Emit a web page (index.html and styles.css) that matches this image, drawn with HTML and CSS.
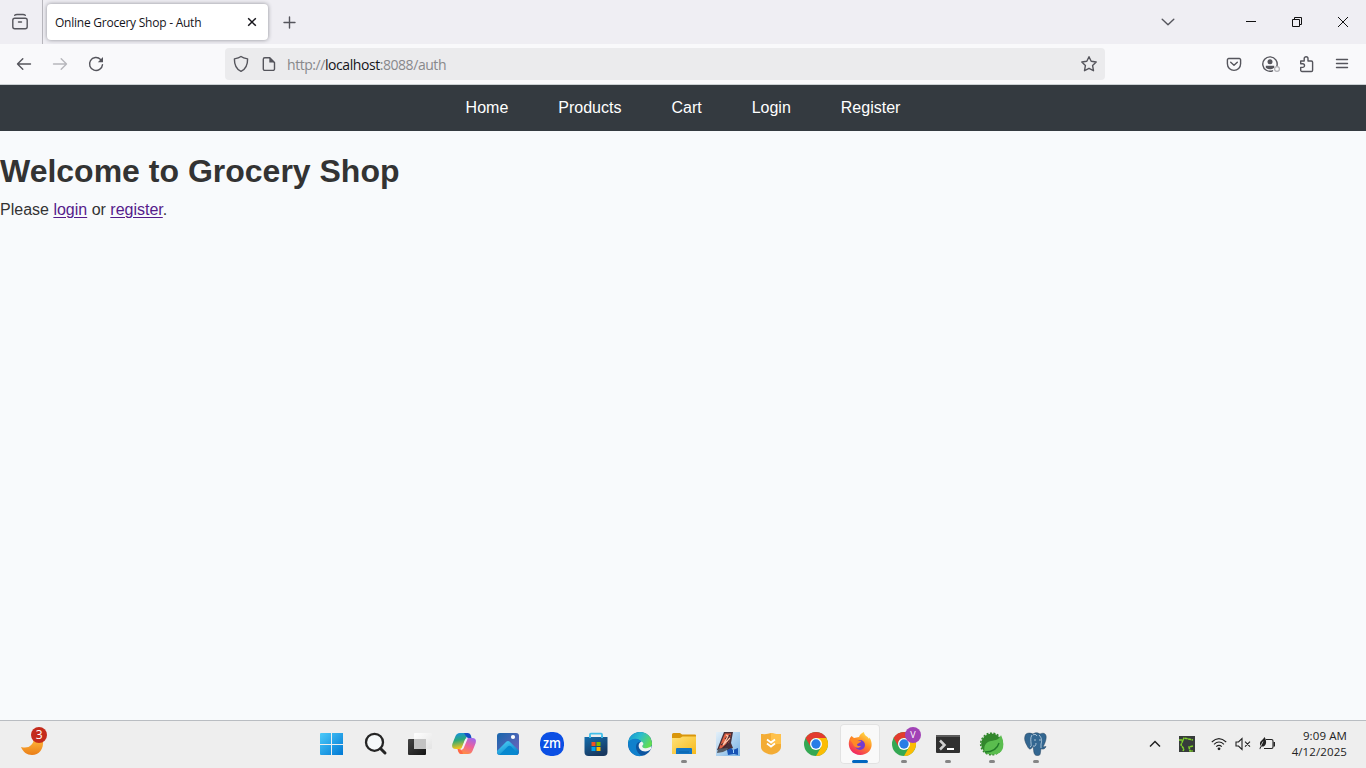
FILE: index.html
```html
<!DOCTYPE html>
<html lang="en">
<head>
<meta charset="utf-8">
<title>Online Grocery Shop - Auth</title>
<link rel="stylesheet" href="styles.css">
</head>
<body>
<header class="tabbar">
  <div class="history"><svg class="line" width="18" height="18" viewBox="0 0 18 18"><rect x="1.8" y="5.2" width="14.4" height="10.6" rx="2"/><path d="M3.7 2.2Q4.5 1.5 6 1.5h6q1.5 0 2.3.7M7.5 9h3"/></svg></div>
  <div class="tab"><span class="tab-title">Online Grocery Shop - Auth</span><svg class="tab-close" width="10" height="10" viewBox="0 0 10 10"><path d="m1.200 1.200 7.600 7.600M8.800 1.200 1.200 8.800"/></svg></div>
  <svg class="line newtab" width="14" height="14" viewBox="0 0 14 14"><path d="M6.500 2v11M1 7.500h11"/></svg>
  <div class="window-controls">
    <svg class="line" width="14" height="10" viewBox="0 0 14 10"><path d="m1.200 2.200 5.800 5.500 5.800-5.500"/></svg>
    <svg class="control minimize" width="12" height="12" viewBox="0 0 12 12"><path d="M1 5.500h10"/></svg>
    <svg class="control restore" width="12" height="12" viewBox="0 0 12 12"><path d="M1.500 3.500h7v7h-7zM3.500 3.500v-2h7v7h-2"/></svg>
    <svg class="control close" width="12" height="12" viewBox="0 0 12 12"><path d="m1 1 10 10M11 1 1 11"/></svg>
  </div>
</header>
<div class="toolbar">
  <div class="nav-buttons">
    <svg class="line" width="16" height="16" viewBox="0 0 16 16"><path d="M14.500 8H1.500M6.800 2.700 1.500 8l5.300 5.300"/></svg>
    <svg class="line disabled" width="16" height="16" viewBox="0 0 16 16"><path d="M1.500 8h13M9.200 2.700 14.500 8l-5.300 5.300"/></svg>
    <svg class="line" width="16" height="16" viewBox="0 0 16 16"><path d="M14.500 8.600A6.500 6.500 0 1 1 12.600 3.400l1 1"/><path class="solid" d="M15 1v5.200H9.800z"/></svg>
  </div>
  <div class="urlbar">
    <svg class="line" width="16" height="18" viewBox="0 0 16 18"><path d="M8 1.500C9.500 2.700 12 3.500 14.600 3.900 14.700 9.500 12.800 14 8 16.400 3.200 14 1.300 9.500 1.400 3.900 4 3.500 6.500 2.700 8 1.500z"/></svg>
    <svg class="line page-icon" width="14" height="16" viewBox="0 0 14 16"><path d="M2.800 1.700h5l4.700 4.700v6.500a1.500 1.500 0 0 1-1.500 1.500H2.800a1.500 1.500 0 0 1-1.500-1.500V3.200a1.500 1.500 0 0 1 1.500-1.500z"/><path class="solid" d="M7.300 1.300v5.200h5.200z"/></svg>
    <span class="url">http://<b>localhost</b>:8088/auth</span>
    <svg class="line star" width="18" height="18" viewBox="0 0 18 18"><path d="m9 1.700 2.200 4.600 5 .7-3.600 3.600.9 5.100L9 13.300l-4.500 2.400.9-5.100L1.800 7l5-.7z"/></svg>
  </div>
  <div class="actions">
    <svg class="line" width="16" height="16" viewBox="0 0 16 16"><path d="M2.700 2.500h10.600a1.300 1.300 0 0 1 1.300 1.300v4a6.600 6.600 0 0 1-13.200 0v-4a1.300 1.300 0 0 1 1.300-1.300zM4.700 6.200 8 9.300l3.300-3.100"/></svg>
    <svg class="line account" width="20" height="18" viewBox="0 0 20 18"><path d="M11.500 15.800A7.200 7.200 0 1 1 15.900 11"/><circle class="solid" cx="9" cy="6.700" r="2.500"/><path class="solid" d="M4.800 10.700h8.400v2Q9 15.800 4.800 12.700z"/><circle class="muted" cx="16" cy="14" r="2.400"/></svg>
    <svg class="line" width="16" height="18" viewBox="0 0 16 18"><path d="M1.700 6h3.500V3.600a1.900 1.900 0 0 1 3.800 0V6h3.300a1.300 1.300 0 0 1 1.300 1.300v7.900a1.300 1.300 0 0 1-1.300 1.300H3a1.300 1.300 0 0 1-1.300-1.300v-2.800h2a1.800 1.800 0 0 0 0-3.600h-2z"/></svg>
    <svg class="line" width="14" height="12" viewBox="0 0 14 12"><path d="M1.500 1.500h11M1.500 5.500h11M1.500 9.500h11"/></svg>
  </div>
</div>
<nav class="site-nav"><a>Home</a><a>Products</a><a>Cart</a><a>Login</a><a>Register</a></nav>
<main class="content">
  <h1>Welcome to Grocery Shop</h1>
  <p>Please <a href="#login">login</a> or <a href="#register">register</a>.</p>
</main>
<footer class="taskbar">
  <svg class="weather" width="30" height="32" viewBox="0 0 30 32">
    <defs><linearGradient id="moon" x2="0" y2="1"><stop stop-color="#ffb83b"/><stop offset="1" stop-color="#ea7e18"/></linearGradient></defs>
    <path fill="url(#moon)" d="M1 20c8 2 12-2 13-8l9 1c1 9-4 15-11 15-5 0-9-3-11-8z"/><circle cx="19" cy="8" r="8" fill="#c42b1c"/><text class="badge-count" x="19.300" y="12">3</text>
  </svg>
  <div class="apps">
    <div class="app"><svg width="24" height="24" viewBox="0 0 24 24"><defs><linearGradient id="win" x2="1" y2="1"><stop stop-color="#4ccbfa"/><stop offset="1" stop-color="#0078d4"/></linearGradient></defs><path fill="url(#win)" d="M1 1h22v22H1q-1 0-1-1V2q0-1 1-1z"/><path stroke="#eee" d="M11.500 1v22M0 12.500h23"/></svg></div>
    <div class="app"><svg width="24" height="24" viewBox="0 0 24 24"><circle cx="10.500" cy="10.300" r="8.500" fill="#f5f8f9" stroke="#252525" stroke-width="2.300"/><path stroke="#252525" stroke-width="3" stroke-linecap="round" d="m16.500 16.500 4.500 4.500"/></svg></div>
    <div class="app"><svg width="24" height="24" viewBox="0 0 24 24"><defs><linearGradient id="view" x2="1" y2="1"><stop stop-color="#444"/><stop offset="1" stop-color="#151515"/></linearGradient><linearGradient id="pane" x2="1" y2="1"><stop stop-color="#fff"/><stop offset="1" stop-color="#e4e4e4"/></linearGradient></defs><rect y="7" width="18" height="16" rx="1" fill="url(#view)"/><rect x="6" y="1" width="18" height="16" rx="1" fill="url(#pane)"/><path fill="#c3c3c3" d="M6 7h12v10H6z"/></svg></div>
    <div class="app"><svg width="24" height="24" viewBox="0 0 24 24"><defs><linearGradient id="cpa" x2=".2" y2="1"><stop stop-color="#168eed"/><stop offset=".5" stop-color="#2aa879"/><stop offset="1" stop-color="#f2c31d"/></linearGradient><linearGradient id="cpb" x1=".8" x2=".4" y2="1"><stop stop-color="#9c68ee"/><stop offset=".5" stop-color="#ec619e"/><stop offset="1" stop-color="#ff8b48"/></linearGradient></defs><path fill="url(#cpa)" d="M8 1h8l-5.500 14q-.8 2-3 2H4q-5 0-3.700-5L3.300 4.500Q4.500 1 8 1z"/><path fill="url(#cpb)" d="M16 22H8l5.500-14q.8-2 3-2H20q5 0 3.700 5l-3 7.500Q19.500 22 16 22z"/><path fill="#1750c5" d="M12 1h4q2.300 0 2.900 2.500L19.500 6h-3q-2 0-2.800-2.300z"/><path fill="#ff6845" d="M5.500 17H7q2.300 0 3 2l1 3H9q-2 0-2.800-2.500z"/><path fill="#f4f2f4" d="M12.800 8q.6-1.700 2.300-1.700h.7l-4.200 9.900q-.5 1.200-2 1.200h-.5z"/></svg></div>
    <div class="app"><svg width="24" height="24" viewBox="0 0 24 24"><defs><linearGradient id="pic" x2="1" y2="1"><stop stop-color="#1766ac"/><stop offset="1" stop-color="#7464bd"/></linearGradient><linearGradient id="hill" x2=".7" y2="1"><stop stop-color="#54dbfb"/><stop offset="1" stop-color="#077fc9"/></linearGradient></defs><rect x="1" y="1" width="22" height="22" rx="3" fill="url(#pic)"/><path fill="url(#hill)" d="M1 19 10.500 9.500q1.500-1.200 3 0l9.300 9V20q0 3-3 3H4q-3 0-3-3z"/><path fill="#0788cf" d="m3.500 22.700 8.500-8.500q1.500-1 3 0l7 8-2 .8H4z"/><circle cx="17" cy="5" r="2.100" fill="#fff"/></svg></div>
    <div class="app"><svg width="24" height="24" viewBox="0 0 24 24"><rect width="24" height="24" rx="10.500" fill="#0b4fe4"/><text class="zoom-logo" x="12" y="15.600" textLength="18" lengthAdjust="spacingAndGlyphs">zm</text></svg></div>
    <div class="app"><svg width="24" height="24" viewBox="0 0 24 24"><defs><linearGradient id="store" x2=".5" y2="1"><stop stop-color="#146eae"/><stop offset="1" stop-color="#183860"/></linearGradient></defs><path fill="none" stroke="#42bfe9" stroke-width="1.800" d="M6 7V2.500q0-.8.8-.8h10.400q.8 0 .8.800V7"/><path fill="url(#store)" d="M.5 5h23v15q0 4-4 4h-15q-4 0-4-4z"/><path stroke="#42bfe9" stroke-width="1.800" d="M6 4v2M18 4v2"/><path fill="#f25022" d="M7.500 10h4v4h-4z"/><path fill="#7fba00" d="M12.500 10h4v4h-4z"/><path fill="#00a4ef" d="M7.500 15h4v4h-4z"/><path fill="#ffb900" d="M12.500 15h4v4h-4z"/></svg></div>
    <div class="app"><svg width="24" height="24" viewBox="0 0 24 24"><defs><linearGradient id="edge" x2="1" y2=".5"><stop stop-color="#128fd2"/><stop offset=".5" stop-color="#2bbdce"/><stop offset="1" stop-color="#62dc55"/></linearGradient></defs><circle cx="12" cy="12" r="12" fill="#0c55a0"/><path fill="url(#edge)" d="M0 11C1.500-3.500 22.500-4 24 11c.2 4.500-4 6.500-8.500 6-2-.3-1.500-1.500-1-3C16 8 6 4 0 11z"/><path fill="#1080cc" d="M0 11C3 5 12 6 13.500 10 9 9 6.500 14 9 19c1 2.300 3 4 5.500 4.700C6 26 0 19 0 11z"/><path fill="#f1f3f4" d="M13.700 9.500c2.600 1.800 1.500 3.200.8 4.300-.6 1.200.6 2.300 2.500 2.500 2.500.3 4.500-.8 6.500-2.200l-.5 3c-2.500 3-8.500 3.300-11 .2-2.300-2.800-1.500-6.700 1.700-7.800z"/></svg></div>
    <div class="app running"><svg width="24" height="24" viewBox="0 0 24 24"><defs><linearGradient id="folder" x2="1" y2="1"><stop stop-color="#ffe27a"/><stop offset="1" stop-color="#f7b91b"/></linearGradient></defs><path fill="#d9960b" d="M0 2.500Q0 1 1.500 1H8l2 1.500h13q1 0 1 1V8H0z"/><path fill="url(#folder)" d="M0 6h8l2.500-1.500H24V22H0z"/><path fill="#1375c4" d="M4 22v-5q0-1 1-1h14q1 0 1 1v5z"/><path fill="#0762aa" d="M7 19.500h10v1H7z"/></svg></div>
    <div class="app"><svg width="24" height="24" viewBox="0 0 24 24"><defs><linearGradient id="four" x2="1" y2="1"><stop stop-color="#e4f0f9"/><stop offset="1" stop-color="#78b3e5"/></linearGradient></defs><path fill="url(#four)" d="M0 0h24v24H0z"/><path fill="#493039" d="M8 0h9l-2 11 2 5-5 2H1L6 5z"/><path fill="#e06143" d="M9 1.500h6l-2 9-8 6H3L7 6z"/><path fill="none" stroke="#43242c" stroke-width="1.200" d="m9 7 5-4-4 7-5 3M14 6l-3 6-4 4"/><path fill="none" stroke="#ffc4aa" stroke-width="1.200" d="m10 3 2 1-5 9 7-7"/><path fill="#555c66" d="m2 17 10-1-1 2-4 2-6 1z"/><path fill="#1753b5" d="m11 18 4-2 2 2 5-2v7l-4-1-6 1z"/><path fill="#a0d4ff" d="M17 18h1v3h-1z"/></svg></div>
    <div class="app"><svg width="24" height="24" viewBox="0 0 24 24"><path fill="#f3ac35" d="M2 2q5 .5 9-1 4 1.500 10 1v13c0 5-7 7.500-10 7.500S1 20 1 15V2z"/><path fill="#ffc14b" d="M11 1q4 1.500 10 1v10H11z"/><path fill="none" stroke="#fff" stroke-width="1.800" d="m7 7.500 4 3 4-3m-8 4 4 3 4-3"/></svg></div>
    <div class="app"><svg width="24" height="24" viewBox="0 0 24 24"><g id="chrome"><circle cx="12" cy="12" r="12" fill="#34a853"/><path fill="#fbbc04" d="M12 6h10.400A12 12 0 0 1 12 24l5.200-9z"/><path fill="#e33b2e" d="M1.600 6A12 12 0 0 1 22.400 6H12a6 6 0 0 0-5.200 9z"/><circle cx="12" cy="12" r="6" fill="#fff"/><circle cx="12" cy="12" r="4.700" fill="#287de6"/></g></svg></div>
    <div class="app active"><svg width="24" height="24" viewBox="0 0 24 24"><defs><linearGradient id="fox" x1=".8" x2=".2" y2="1"><stop stop-color="#ffe54a"/><stop offset=".45" stop-color="#ff8b24"/><stop offset="1" stop-color="#ef176c"/></linearGradient></defs><path fill="url(#fox)" d="M2 6 3.500 4 6 6l5-1c1-3 3-4 5-5 0 4 4 4 5 7l.5-1.500c3 5 3 10-.5 14-5 5-14 4.500-18-1C0 14 .5 10 2 6z"/><circle cx="12" cy="13" r="5" fill="#743bd0"/><path fill="#ff8b27" d="M2 8c3-3 6-2 7 0l4 1c0 2-4 2-4 4 1 1.500 2.500 1 4 1-2 3-7 2-8-2-1-2-3-4-3-4z"/></svg></div>
    <div class="app running"><svg width="24" height="24" viewBox="0 0 24 24"><use href="#chrome"/></svg><span class="profile">V</span></div>
    <div class="app running"><svg width="24" height="24" viewBox="0 0 24 24"><path fill="#303030" d="M0 3h24v17q0 1-1 1H1q-1 0-1-1z"/><path fill="#5c5c5c" d="M0 3h24v2H0z"/><path fill="none" stroke="#d0d0d0" stroke-width="2.500" d="m4 8.500 4.500 4.500L4 17.500"/><path stroke="#fff" stroke-width="2" d="M11 17h7"/></svg></div>
    <div class="app running"><svg width="24" height="24" viewBox="0 0 24 24"><circle cx="11.500" cy="12" r="10.400" fill="#32872c"/><circle cx="11.500" cy="12" r="10.800" fill="none" stroke="#32872c" stroke-width="1.600" stroke-dasharray="2 1.500"/><path fill="#5abd4e" d="M21 3c4 9 3 17-4 19-4 1-8 0-12-1-2-6 0-11 6-12 5-1 8-1 10-6z"/><path fill="none" stroke="#227c28" stroke-width="1.400" d="M5 20c7 0 12-2 14-9"/></svg></div>
    <div class="app running"><svg width="24" height="24" viewBox="0 0 24 24"><path fill="#336791" stroke="#25405b" stroke-width=".5" d="M1 4c1-4 6-3 8-2 3-2 5-1 7 0 4-2 7 0 6 5-.5 3-2 6-3 8l3-.5c-1 3-4 3-5 2-1 6 0 7-4 7-4 0-3-6-4-9-3 4-4 3-6-1C1 10 0 7 1 4z"/><path fill="none" stroke="#dce9f3" stroke-width=".7" d="M8 3c-2 3-1 6-1 8s1 3-1 4M9 14q3 1 3-3M15 3c3 3 3 6 2 9v4M10 8h2M15 8h2M9 3c1-1 3-1 4 1"/></svg></div>
  </div>
  <div class="tray">
    <svg width="12" height="8" viewBox="0 0 12 8"><path class="tray-line" d="m1 6.500 5-5 5 5"/></svg>
    <svg width="16" height="16" viewBox="0 0 16 16"><path fill="#373b3b" d="M0 0h16v16H0z"/><path fill="none" stroke="#7ed12b" stroke-width="1.500" stroke-dasharray="3 .5" d="M0 4h4l1-2 9 2M4 4 2 9l3 4-1 2M14 10l-4 1 1 4h3"/></svg>
    <svg width="16" height="14" viewBox="0 0 16 14"><path class="tray-line thin" d="M.8 5q7-6.700 14.400 0M3 7.300q5-4.500 10 0M5.200 9.600Q8 7 10.800 9.600"/><circle cx="8" cy="11.800" r="1.400" fill="#222"/></svg>
    <svg width="16" height="14" viewBox="0 0 16 14"><path class="tray-line thin" d="M1 5h2.500L7 1.600v10.800L3.500 9H1zM10 4.700l5 5m0-5-5 5"/></svg>
    <svg width="18" height="14" viewBox="0 0 18 14"><path class="tray-line thin" d="M7 2.500h5.500q1.500 0 1.500 1.500v6q0 1.500-1.500 1.500H5"/><path fill="#222" d="M14.500 5H16v4.500h-1.500zM5.500 0C8 4 7.500 8 4.500 9.500h-2L1 12.500l-.5-1 1-2.500C-.5 4 3.500 4 5.500 0z"/><path stroke="#eee" stroke-width=".7" d="m1.500 9.500 2.500-5"/></svg>
    <div class="clock"><span class="time">9:09 AM</span><span class="date">4/12/2025</span></div>
  </div>
</footer>
</body>
</html>
```
FILE: styles.css
```css
* { box-sizing: border-box; }
body { margin: 0; width: 1366px; height: 768px; overflow: hidden; display: flex; flex-direction: column; font-family: "Liberation Sans", Arial, sans-serif; background: #f8fafc; color: #333; }
svg { display: block; flex: none; overflow: visible; }
.line { fill: none; stroke: #55555c; stroke-width: 1.4; stroke-linejoin: round; stroke-linecap: round; }
.line .solid { fill: #55555c; stroke: none; }
.line .muted { stroke: #b0b0b5; stroke-width: 1.2; }
.tabbar { height: 44px; flex: none; display: flex; align-items: center; background: #efeef3; }
.history { width: 43px; height: 44px; padding: 13px 0 0 11px; border-right: 1px solid #b7b6bc; }
.tab { display: flex; align-items: center; justify-content: space-between; width: 221px; height: 36px; margin-left: 4px; padding: 0 11px 0 8px; background: #fff; border-radius: 4px; box-shadow: 0 0 4px #8d8d94; }
.tab-title { font: 12px "Open Sans", sans-serif; letter-spacing: -.24px; color: #15141a; white-space: nowrap; }
.tab-close { stroke: #15141a; stroke-width: 1.5; }
.newtab { margin-left: 15px; }
.window-controls { display: flex; align-items: center; margin-left: auto; padding-right: 17px; }
.control { fill: none; stroke: #111; stroke-width: 1; }
.minimize { margin-left: 70px; }
.restore { margin-left: 34px; }
.close { margin-left: 34px; }
.toolbar { height: 41px; flex: none; display: flex; align-items: center; background: #f9f9fb; border-bottom: 1px solid #cbd0d3; }
.nav-buttons { display: flex; gap: 20px; padding-left: 16px; width: 225px; }
.disabled { stroke: #b7b7bc; }
.urlbar { width: 880px; height: 32px; padding: 0 7px 0 8px; display: flex; align-items: center; background: #ebebed; border-radius: 4px; }
.page-icon { margin-left: 13px; }
.url { margin: 1px 0 0 11px; font: 14px "Open Sans", sans-serif; letter-spacing: -.44px; color: #88888b; white-space: nowrap; }
.url b { font-weight: 400; color: #15141a; }
.star { margin-left: auto; }
.actions { display: flex; align-items: center; gap: 20px; margin-left: 121px; }
.account { margin: 0 -2px 0 -1px; }
.site-nav { height: 46px; flex: none; display: flex; justify-content: center; gap: 50px; padding-top: 14px; background: #343a40; color: #fff; font-size: 16px; line-height: 18px; }
.content { flex: 1; padding-top: 21px; }
h1 { margin: 0 0 10px; font-size: 32px; line-height: 38px; color: #333; white-space: nowrap; }
p { margin: 0; font-size: 16px; line-height: 20px; }
p a { color: #551a8b; text-underline-offset: 2px; }
.taskbar { height: 48px; flex: none; display: flex; align-items: center; padding-bottom: 1px; background: #eee; border-top: 1px solid #b9bdc2; }
.weather { margin: -2px 262px 0 20px; }
.badge-count { font: 12px "Open Sans", sans-serif; fill: #fff; text-anchor: middle; }
.apps { display: flex; gap: 4px; }
.app { position: relative; width: 40px; height: 40px; display: flex; align-items: center; justify-content: center; border-radius: 4px; }
.app.active { background: #f9f9f9; box-shadow: inset 0 0 0 1px #e2e2e2; }
.running::after, .active::after { content: ""; position: absolute; bottom: 1px; width: 6px; height: 3px; border-radius: 2px; background: #858585; }
.active::after { width: 16px; background: #0067c0; }
.zoom-logo { font: 600 14px "Open Sans", sans-serif; fill: #fff; text-anchor: middle; }
.profile { position: absolute; left: 21px; top: 3px; width: 16px; height: 16px; border-radius: 50%; background: #a142b6; color: #fff; font: 9px/16px "Open Sans", sans-serif; text-align: center; }
.tray { display: flex; align-items: center; margin-left: auto; padding-right: 19px; }
.tray svg { margin-right: 8px; }
.tray svg:first-child { margin-right: 18px; }
.tray svg:nth-child(2) { margin-right: 16px; }
.tray svg:nth-child(5) { margin-right: 6px; }
.tray-line { fill: none; stroke: #222; stroke-width: 1.5; }
.thin { stroke-width: 1.1; }
.clock { width: 64px; display: flex; flex-direction: column; align-items: flex-end; font: 11.5px/16px "Open Sans", sans-serif; letter-spacing: .1px; color: #222; }
```
